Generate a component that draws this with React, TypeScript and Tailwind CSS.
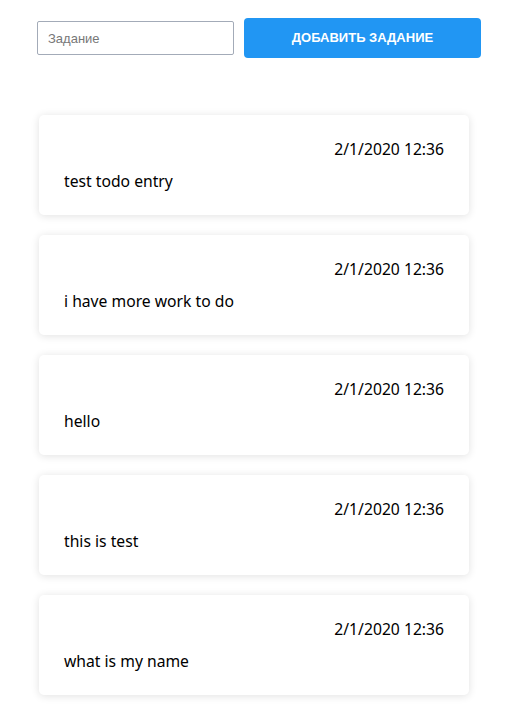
import { useState } from 'react';

interface Todo {
  id: number;
  text: string;
  date: string;
}

const initialTodos: Todo[] = [
  { id: 1, text: 'test todo entry', date: '2/1/2020 12:36' },
  { id: 2, text: 'i have more work to do', date: '2/1/2020 12:36' },
  { id: 3, text: 'hello', date: '2/1/2020 12:36' },
  { id: 4, text: 'this is test', date: '2/1/2020 12:36' },
  { id: 5, text: 'what is my name', date: '2/1/2020 12:36' },
];

export default function App() {
  const [todos, setTodos] = useState<Todo[]>(initialTodos);
  const [value, setValue] = useState('');

  const addTodo = (e: React.FormEvent) => {
    e.preventDefault();
    if (!value.trim()) return;
    setTodos([...todos, { id: Date.now(), text: value.trim(), date: new Date().toLocaleString() }]);
    setValue('');
  };

  return (
    <div className="min-h-screen bg-white font-['Noto_Sans',sans-serif] text-black">
      <form onSubmit={addTodo} className="flex items-center gap-[10px] pl-[37px] pr-[26px] pt-[18px]">
        <input
          type="text"
          value={value}
          onChange={(e) => setValue(e.target.value)}
          placeholder="Задание"
          className="h-[34px] w-[197px] rounded-[2px] border border-[#a3abb8] px-[10px] font-['Liberation_Sans',sans-serif] text-[13px] outline-none placeholder:text-[#777]"
        />
        <button
          type="submit"
          className="h-[40px] flex-1 rounded-[4px] bg-[#2196f3] font-['Liberation_Sans',sans-serif] text-[13px] font-bold uppercase text-white"
        >
          Добавить задание
        </button>
      </form>

      <div className="mt-[57px] flex flex-col gap-[20px] pl-[39px] pr-[38px] pb-[20px]">
        {todos.map((todo) => (
          <div
            key={todo.id}
            className="flex h-[100px] flex-col rounded-[5px] bg-white px-[25px] pt-[24px] shadow-[0_1px_8px_rgba(0,0,0,0.12)]"
          >
            <div className="text-right text-[15.7px] leading-[20px]">{todo.date}</div>
            <div className="mt-[12px] text-[15.7px] leading-[20px]">{todo.text}</div>
          </div>
        ))}
      </div>
    </div>
  );
}
